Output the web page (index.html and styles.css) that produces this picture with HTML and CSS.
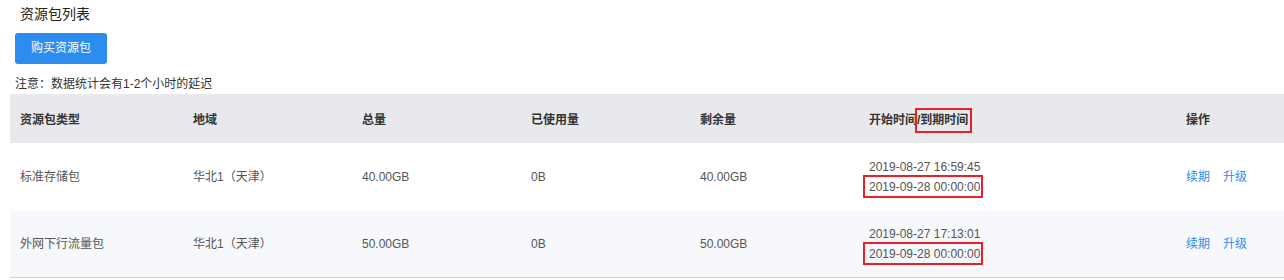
FILE: index.html
```html
<!DOCTYPE html>
<html lang="zh-CN">
<head>
<meta charset="utf-8">
<title>资源包列表</title>
<link rel="stylesheet" href="styles.css">
</head>
<body>
<div class="page">
  <div class="title">资源包列表</div>
  <button class="buy-btn" type="button">购买资源包</button>
  <div class="note">注意：数据统计会有1-2个小时的延迟</div>
  <table class="pkg-table">
    <colgroup>
      <col class="c1"><col class="c2"><col class="c3"><col class="c4"><col class="c5"><col class="c6"><col class="c7">
    </colgroup>
    <thead>
      <tr>
        <th>资源包类型</th>
        <th>地域</th>
        <th>总量</th>
        <th>已使用量</th>
        <th>剩余量</th>
        <th>开始时间<span class="mark mark-head">/到期时间</span></th>
        <th>操作</th>
      </tr>
    </thead>
    <tbody>
      <tr class="row-a">
        <td>标准存储包</td>
        <td>华北1（天津）</td>
        <td>40.00GB</td>
        <td>0B</td>
        <td>40.00GB</td>
        <td><div class="date">2019-08-27 16:59:45</div><div class="date"><span class="mark mark-date">2019-09-28 00:00:00</span></div></td>
        <td><a class="op" href="#">续期</a><a class="op" href="#">升级</a></td>
      </tr>
      <tr class="row-b">
        <td>外网下行流量包</td>
        <td>华北1（天津）</td>
        <td>50.00GB</td>
        <td>0B</td>
        <td>50.00GB</td>
        <td><div class="date">2019-08-27 17:13:01</div><div class="date"><span class="mark mark-date">2019-09-28 00:00:00</span></div></td>
        <td><a class="op" href="#">续期</a><a class="op" href="#">升级</a></td>
      </tr>
    </tbody>
  </table>
</div>
</body>
</html>
```

FILE: styles.css
```css
html, body {
  margin: 0;
  padding: 0;
  background: #ffffff;
}
body {
  font-family: "Liberation Sans", "Noto Sans CJK SC", sans-serif;
  font-size: 12px;
  color: #333333;
}
.page {
  padding-left: 10px;
}
.title {
  margin-top: 4px;
  padding-left: 10px;
  font-size: 14px;
  line-height: 20px;
  color: #222222;
}
.buy-btn {
  display: block;
  margin: 9px 0 0 5px;
  width: 92px;
  height: 31px;
  padding: 0;
  border: none;
  border-radius: 3px;
  background: #2d8cf0;
  color: #ffffff;
  font-family: inherit;
  font-size: 12px;
  line-height: 31px;
  text-align: center;
}
.note {
  margin-top: 10px;
  padding-left: 5px;
  line-height: 20px;
  color: #333333;
}
.pkg-table {
  width: 1274px;
  border-collapse: collapse;
  table-layout: fixed;
}
.c1 { width: 173px; }
.c2, .c3, .c4, .c5 { width: 169px; }
.c6 { width: 317px; }
.c7 { width: 108px; }
.pkg-table th,
.pkg-table td {
  padding: 0 0 0 10px;
  text-align: left;
  vertical-align: middle;
  white-space: nowrap;
}
.pkg-table thead tr {
  background: #e8e9ed;
  height: 49px;
}
.pkg-table th {
  font-weight: bold;
  color: #333333;
}
.pkg-table td {
  color: #555555;
  line-height: 20px;
}
.row-a {
  height: 68px;
  background: #ffffff;
}
.row-b {
  height: 66px;
  background: #f7f8fc;
  border-bottom: 1px solid #d4d4d4;
}
.date {
  line-height: 20px;
}
.op {
  color: #2d8cf0;
  text-decoration: none;
  margin-right: 13px;
}
.mark {
  position: relative;
}
.mark::after {
  content: "";
  position: absolute;
  top: 50%;
  box-sizing: border-box;
  border: 2px solid #e8202a;
}
.mark-head::after {
  left: -2px;
  right: -4px;
  height: 25px;
  margin-top: -12.5px;
}
.mark-date::after {
  left: -6px;
  right: -3px;
  height: 23px;
  margin-top: -12px;
}
```
